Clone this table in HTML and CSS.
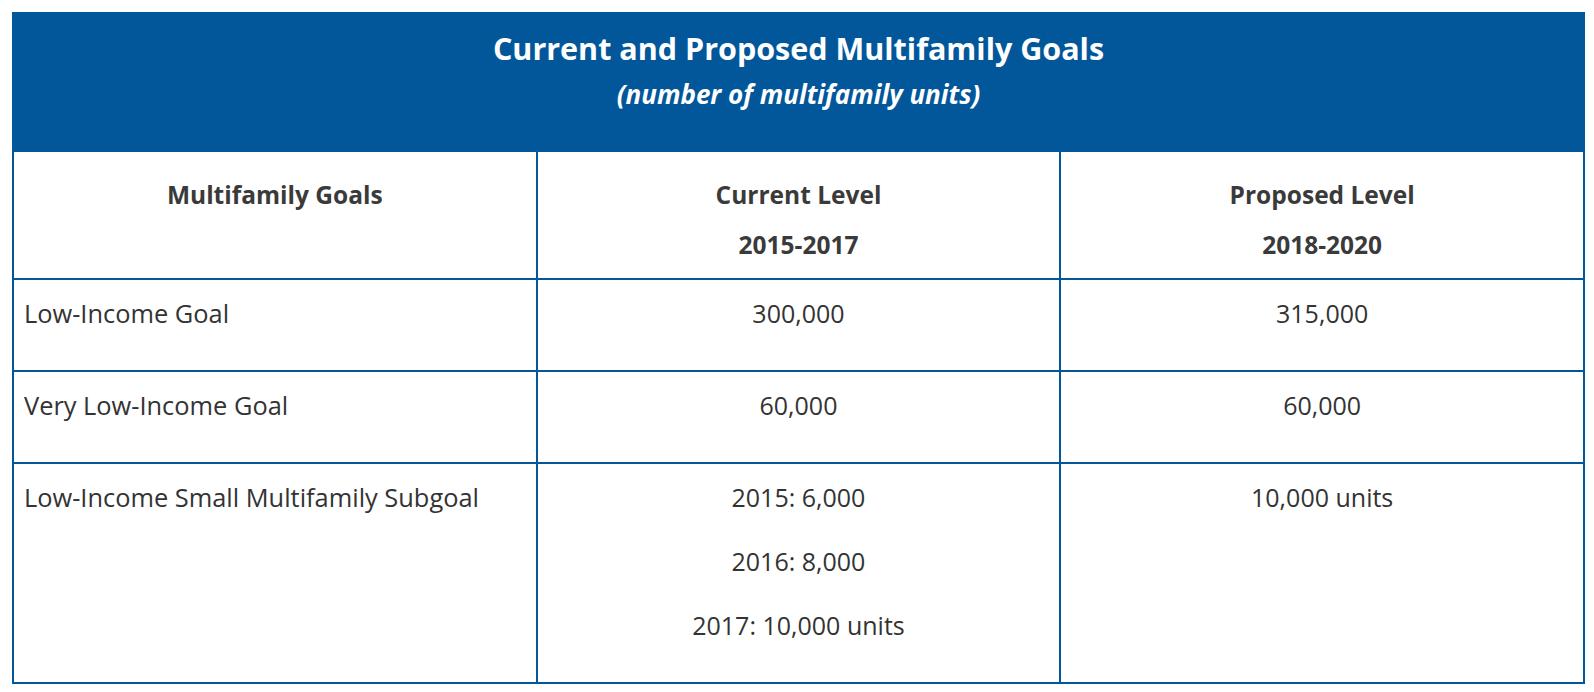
FILE: index.html
```html
<!DOCTYPE html>
<html lang="en">
<head>
<meta charset="utf-8">
<title>Current and Proposed Multifamily Goals</title>
<link rel="stylesheet" href="styles.css">
</head>
<body>
<table class="goals">
  <colgroup>
    <col class="c1"><col class="c2"><col class="c3">
  </colgroup>
  <thead>
    <tr>
      <th colspan="3" class="banner">
        <div class="banner-title">Current and Proposed Multifamily Goals</div>
        <div class="banner-sub">(number of multifamily units)</div>
      </th>
    </tr>
    <tr class="col-heads">
      <th><p>Multifamily Goals</p></th>
      <th><p>Current Level</p><p>2015-2017</p></th>
      <th><p>Proposed Level</p><p>2018-2020</p></th>
    </tr>
  </thead>
  <tbody>
    <tr>
      <td class="label"><p>Low-Income Goal</p></td>
      <td class="num"><p>300,000</p></td>
      <td class="num"><p>315,000</p></td>
    </tr>
    <tr>
      <td class="label"><p>Very Low-Income Goal</p></td>
      <td class="num"><p>60,000</p></td>
      <td class="num"><p>60,000</p></td>
    </tr>
    <tr>
      <td class="label"><p>Low-Income Small Multifamily Subgoal</p></td>
      <td class="num"><p>2015: 6,000</p><p>2016: 8,000</p><p>2017: 10,000 units</p></td>
      <td class="num"><p>10,000 units</p></td>
    </tr>
  </tbody>
</table>
</body>
</html>
```

FILE: styles.css
```css
html, body {
  background: #ffffff;
}

body {
  margin: 12px 0 0 12px;
  font-family: "Open Sans", "Liberation Sans", sans-serif;
  color: #333333;
}

.goals {
  width: 1573px;
  border-collapse: collapse;
  table-layout: fixed;
}

.goals th,
.goals td {
  border: 2px solid #02579a;
  vertical-align: top;
  padding: 0;
}

.goals p {
  margin: 0;
}

.goals th.banner {
  background: #02579a;
  color: #ffffff;
  text-align: center;
  padding: 14px 10px 38px;
}

.banner-title {
  font-size: 30.5px;
  line-height: 40px;
  font-weight: 700;
  margin-bottom: 8px;
}

.banner-sub {
  font-size: 26px;
  line-height: 36px;
  font-weight: 700;
  font-style: italic;
}

.col-heads th {
  font-size: 24.5px;
  line-height: 36px;
  font-weight: 700;
  color: #3a3a3a;
  text-align: center;
  padding: 25px 10px 15px;
}

.col-heads th p + p {
  margin-top: 14px;
}

.goals td {
  font-size: 25px;
  line-height: 36px;
  font-weight: 400;
  color: #333333;
  padding: 15px 10px 11px;
}

.goals td.label {
  font-size: 25.4px;
  text-align: left;
}

.goals td p {
  margin-bottom: 28px;
}

.num {
  text-align: center;
}
```
